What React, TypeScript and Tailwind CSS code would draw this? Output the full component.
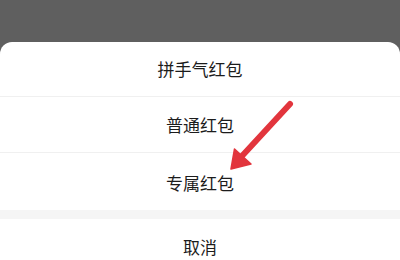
import React from "react";

const font = { fontFamily: '"Noto Sans CJK SC", "Noto Sans", sans-serif' };

function Row({ label, border }: { label: string; border?: boolean }) {
  return (
    <div
      className={`flex h-[56px] items-center justify-center text-[17px] text-[#1c1c1c] ${
        border ? "border-b border-[#f0f0f0]" : ""
      }`}
    >
      {label}
    </div>
  );
}

export default function App() {
  return (
    <div className="relative h-[260px] w-[400px] overflow-hidden bg-[#5f5f5f]" style={font}>
      <div className="mt-[42px] flex flex-col rounded-t-[12px] bg-white">
        <div className="flex h-[55px] items-center justify-center border-b border-[#f0f0f0] text-[17px] text-[#1c1c1c]">
          拼手气红包
        </div>
        <Row label="普通红包" border />
        <div className="flex h-[57px] items-center justify-center pt-[2px] text-[17px] text-[#1c1c1c]">
          专属红包
        </div>
        <div className="h-[9px] bg-[#f5f5f5]" />
        <div className="flex h-[56px] items-center justify-center text-[17px] text-[#1c1c1c]">
          取消
        </div>
      </div>
      <svg className="absolute left-0 top-0" width="400" height="260" viewBox="0 0 400 260">
        <line x1="290" y1="104" x2="242" y2="156" stroke="#e2353d" strokeWidth="6" strokeLinecap="round" />
        <polygon points="231,169 234.5,149 251,164" fill="#e2353d" stroke="#e2353d" strokeWidth="1.5" strokeLinejoin="round" />
      </svg>
    </div>
  );
}
